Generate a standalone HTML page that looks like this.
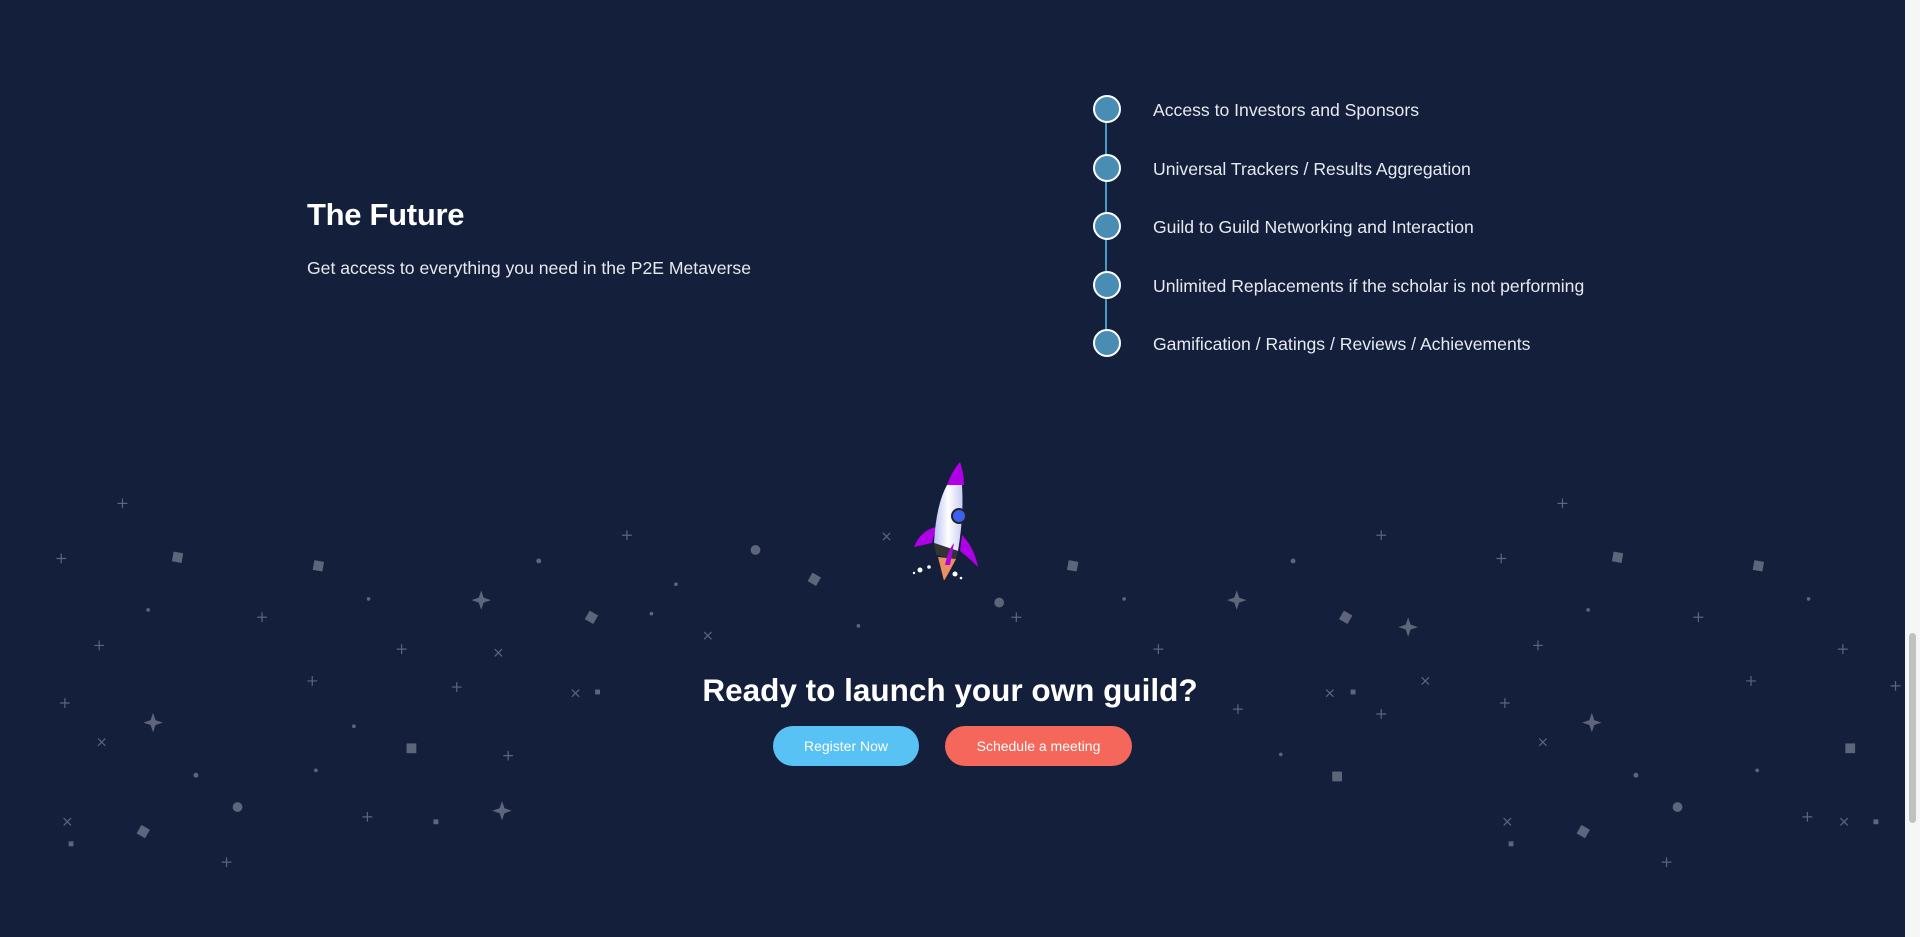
<!DOCTYPE html>
<html><head><meta charset="utf-8"><style>
html,body{margin:0;padding:0;width:1920px;height:937px;overflow:hidden;background:#131f3b;font-family:"Liberation Sans",sans-serif;color:#fff}
.abs{position:absolute}
h2{position:absolute;left:307px;top:197px;margin:0;font-size:31px;font-weight:bold;letter-spacing:-0.3px}
.sub{left:307px;top:258px;font-size:17.6px;color:#e6e9f0}
.item{position:absolute;left:1153px;font-size:17.6px;color:#e6e9f0}
.dot{position:absolute;left:1093px;width:24px;height:24px;border-radius:50%;background:#4a8db4;border:2px solid #fff}
.line{position:absolute;left:1105px;top:109px;width:2px;height:236px;background:#4a9bc4}
.h3{position:absolute;left:0;width:1920px;top:672px;text-align:center;font-size:31.5px;font-weight:bold;margin-left:-10px}
.btn{position:absolute;top:726px;height:40px;border-radius:20px;font-size:14px;line-height:40px;text-align:center;color:#fff}
.sb{position:absolute;left:1905px;top:0;width:15px;height:937px;background:#f6f6f6}
.th{position:absolute;left:1909px;top:633px;width:7px;height:190px;border-radius:4px;background:#c1c1c1}
</style></head><body>
<svg class="abs" style="left:0;top:0" width="1920" height="937" viewBox="0 0 1568 765">
<g fill="#5c6579" stroke="#5c6579">
<g stroke-width="1">
<path d="M100 407v8M96 411h8M50 452v8M46 456h8M81 523v8M77 527h8M53 570v8M49 574h8M214 500v8M210 504h8M255 552v8M251 556h8M373 557v8M369 561h8M328 526v8M324 530h8M300 663v8M296 667h8M185 700v8M181 704h8M415 613v8M411 617h8M512 433v8M508 437h8M830 500v8M826 504h8M946 526v8M942 530h8M1128 433v8M1124 437h8M1226 452v8M1222 456h8M1276 407v8M1272 411h8M1256 523v8M1252 527h8M1387 500v8M1383 504h8M1430 552v8M1426 556h8M1229 570v8M1225 574h8M1128 579v8M1124 583h8M1011 575v8M1007 579h8M1476 663v8M1472 667h8M1361 700v8M1357 704h8M1505 526v8M1501 530h8M1548 556v8M1544 560h8"/>
<path d="M52 668l6 6M58 668l-6 6M80 603l6 6M86 603l-6 6M404 530l6 6M410 530l-6 6M467 563l6 6M473 563l-6 6M575 516l6 6M581 516l-6 6M721 435l6 6M727 435l-6 6M1083 563l6 6M1089 563l-6 6M1161 553l6 6M1167 553l-6 6M1257 603l6 6M1263 603l-6 6M1228 668l6 6M1234 668l-6 6M1503 668l6 6M1509 668l-6 6"/>
</g>
<g stroke="none">
<path d="M393 482 L395 488 L401 490 L395 492 L393 498 L391 492 L385 490 L391 488Z M125 582 L127 588 L133 590 L127 592 L125 598 L123 592 L117 590 L123 588Z M410 654 L412 660 L418 662 L412 664 L410 670 L408 664 L402 662 L408 660Z M1010 482 L1012 488 L1018 490 L1012 492 L1010 498 L1008 492 L1002 490 L1008 488Z M1150 504 L1152 510 L1158 512 L1152 514 L1150 520 L1148 514 L1142 512 L1148 510Z M1300 582 L1302 588 L1308 590 L1302 592 L1300 598 L1298 592 L1292 590 L1298 588Z"/>
<rect x="141" y="451" width="8" height="8" transform="rotate(10 145 455)"/><rect x="256" y="458" width="8" height="8" transform="rotate(10 260 462)"/><rect x="479" y="500" width="8" height="8" transform="rotate(30 483 504)"/><rect x="661" y="469" width="8" height="8" transform="rotate(30 665 473)"/><rect x="872" y="458" width="8" height="8" transform="rotate(10 876 462)"/><rect x="1095" y="500" width="8" height="8" transform="rotate(30 1099 504)"/><rect x="1317" y="451" width="8" height="8" transform="rotate(10 1321 455)"/><rect x="1432" y="458" width="8" height="8" transform="rotate(10 1436 462)"/><rect x="332" y="607" width="8" height="8"/><rect x="1088" y="630" width="8" height="8"/><rect x="113" y="675" width="8" height="8" transform="rotate(30 117 679)"/><rect x="1289" y="675" width="8" height="8" transform="rotate(30 1293 679)"/><rect x="1507" y="607" width="8" height="8"/>
<circle cx="617" cy="449" r="4"/><circle cx="816" cy="492" r="4"/><circle cx="194" cy="659" r="4"/><circle cx="1370" cy="659" r="4"/>
<circle cx="160" cy="633" r="2"/><circle cx="440" cy="458" r="2"/><circle cx="1056" cy="458" r="2"/><circle cx="121" cy="498" r="1.5"/><circle cx="301" cy="489" r="1.5"/><circle cx="532" cy="501" r="1.5"/><circle cx="918" cy="489" r="1.5"/><circle cx="552" cy="477" r="1.5"/><circle cx="1297" cy="498" r="1.5"/><circle cx="1477" cy="489" r="1.5"/><circle cx="701" cy="511" r="1.5"/><rect x="486" y="563" width="4" height="4"/><rect x="1103" y="563" width="4" height="4"/><circle cx="289" cy="593" r="1.5"/><circle cx="1046" cy="616" r="1.5"/><circle cx="258" cy="629" r="1.5"/><circle cx="1435" cy="629" r="1.5"/><circle cx="1336" cy="633" r="2"/><rect x="354" y="669" width="4" height="4"/><rect x="1530" y="669" width="4" height="4"/><rect x="56" y="687" width="4" height="4"/><rect x="1232" y="687" width="4" height="4"/>
</g></g>
</svg>
<svg class="abs" style="left:900px;top:455px" width="90" height="125" viewBox="0 0 90 125">
<defs><linearGradient id="b" x1="0" x2="1"><stop offset="0" stop-color="#b9bff5"/><stop offset=".5" stop-color="#fff"/><stop offset="1" stop-color="#c9ccf2"/></linearGradient></defs>
<path d="M14 92 Q20 76 36 72 L32 88Z" fill="#b000e8"/>
<path d="M62 80 Q74 92 78 112 Q68 102 60 96Z" fill="#b000e8"/>
<path d="M34 88 Q36 50 47 30 L62 30 Q64 60 58 96 Z" fill="url(#b)"/>
<path d="M47 30 Q52 16 60 7 Q64 18 64 30Z" fill="#b000e8"/>
<path d="M34 88 L58 96 L56 104 L36 100Z" fill="#333"/>
<path d="M38 102 Q42 118 44 126 Q52 112 56 104Z" fill="#e89060"/>
<path d="M45 110 Q48 95 54 88 Q52 100 50 110Z" fill="#b000e8"/>
<circle cx="59" cy="61" r="8" fill="#222"/><circle cx="59" cy="61" r="6" fill="#3b5ff0"/>
<circle cx="20" cy="115" r="2.5" fill="#fff"/><circle cx="29" cy="112" r="1.8" fill="#fff"/><circle cx="14" cy="118" r="1.2" fill="#fff"/><circle cx="55" cy="119" r="2.5" fill="#fff"/><circle cx="61" cy="123" r="1.3" fill="#fff"/>
</svg>
<h2>The Future</h2>
<div class="abs sub">Get access to everything you need in the P2E Metaverse</div>
<div class="line"></div>
<div class="dot" style="top:95px"></div><div class="item" style="top:100px">Access to Investors and Sponsors</div>
<div class="dot" style="top:154px"></div><div class="item" style="top:159px">Universal Trackers / Results Aggregation</div>
<div class="dot" style="top:212px"></div><div class="item" style="top:217px">Guild to Guild Networking and Interaction</div>
<div class="dot" style="top:271px"></div><div class="item" style="top:276px">Unlimited Replacements if the scholar is not performing</div>
<div class="dot" style="top:329px"></div><div class="item" style="top:334px">Gamification / Ratings / Reviews / Achievements</div>
<div class="h3">Ready to launch your own guild?</div>
<div class="btn" style="left:773px;width:146px;background:#59c2f5">Register Now</div>
<div class="btn" style="left:945px;width:187px;background:#f5675a">Schedule a meeting</div>
<div class="sb"></div><div class="th"></div>
</body></html>
